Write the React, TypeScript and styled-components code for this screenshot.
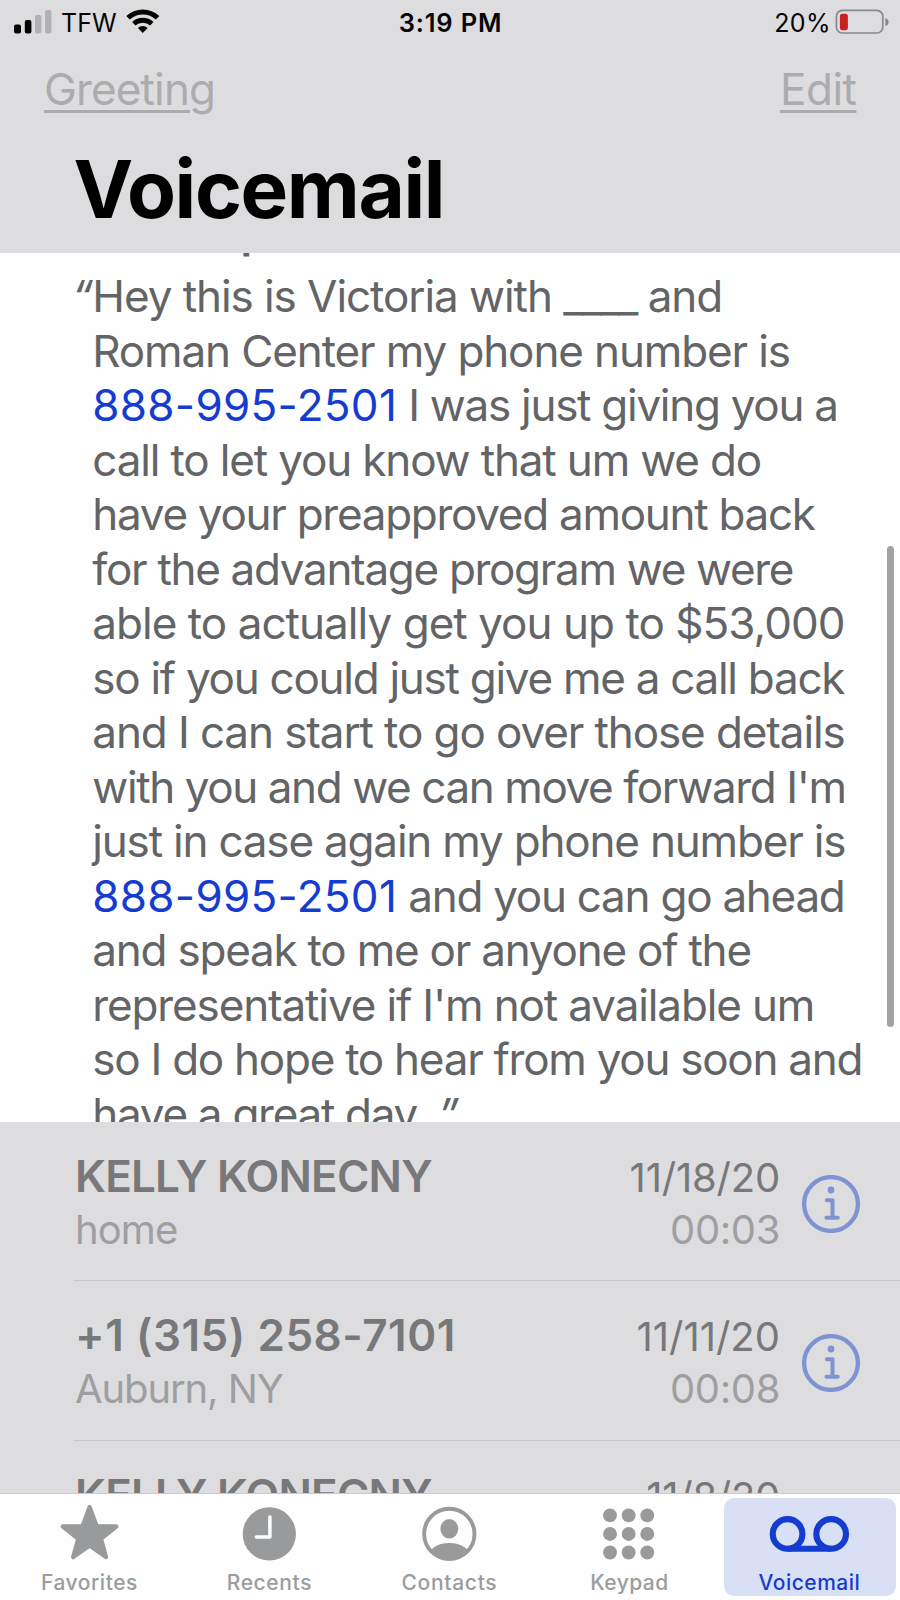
import React from "react";
import styled, { createGlobalStyle } from "styled-components";

const GlobalStyle = createGlobalStyle`
  * { box-sizing: border-box; }
  body { margin: 0; background: #fefefe; font-family: Inter, "Liberation Sans", sans-serif; }
`;

const Screen = styled.div`
  width: 900px;
  height: 1600px;
  display: flex;
  flex-direction: column;
  overflow: hidden;
  background: #fefefe;
`;

const Header = styled.header`
  flex: none;
  height: 253px;
  background: #dddddf;
`;

const StatusBar = styled.div`
  height: 46px;
  padding: 0 10px 0 13px;
  display: grid;
  grid-template-columns: 1fr auto 1fr;
  align-items: center;
  font-size: 25px;
  line-height: 30px;
  color: #050505;
`;

const StatusGroup = styled.div<{ $end?: boolean }>`
  display: flex;
  align-items: center;
  justify-content: ${(p) => (p.$end ? "flex-end" : "flex-start")};
`;

const Carrier = styled.span`
  margin: 0 9px 0 8px;
`;

const Clock = styled.span`
  font-weight: 600;
  font-size: 25.5px;
  letter-spacing: 0.8px;
  padding-right: 2px;
`;

const Percent = styled.span`
  letter-spacing: 0.4px;
  margin-right: 4px;
`;

const NavBar = styled.nav`
  padding: 15.5px 43.5px 0 44px;
  display: flex;
  justify-content: space-between;
`;

const NavLink = styled.a<{ $spacing: number }>`
  font-size: 44px;
  line-height: 54px;
  color: #acacae;
  letter-spacing: ${(p) => p.$spacing}px;
  text-decoration: underline;
  text-decoration-thickness: 3px;
  text-underline-offset: 5px;
`;

const Title = styled.h1`
  margin: 25.5px 0 0 73.5px;
  font-size: 80px;
  line-height: 96px;
  font-weight: 700;
  letter-spacing: -1.4px;
  color: #000;
`;

const Transcript = styled.section`
  flex: none;
  position: relative;
  height: 869px;
  overflow: hidden;
  padding-left: 92.3px;
  color: #636466;
  font-size: 44px;
  line-height: 54.5px;
`;

const TranscriptTitle = styled.h2`
  margin: -48.5px 0 10px -18px;
  font-size: 44px;
  font-weight: 600;
  letter-spacing: -1.1px;
`;

const Line = styled.div`
  height: 54.5px;
  white-space: pre;
`;

const Run = styled.span<{ $spacing: number; $phone?: boolean }>`
  letter-spacing: ${(p) => p.$spacing}px;
  color: ${(p) => (p.$phone ? "#153cd0" : "inherit")};
`;

const OpenQuote = styled.span`
  display: inline-block;
  width: 20.5px;
  margin-left: -20.5px;
  font-style: italic;
`;

const CloseQuote = styled.span`
  display: inline-block;
  margin-left: 11.5px;
  font-style: italic;
`;

const ScrollThumb = styled.div`
  position: absolute;
  right: 6.5px;
  top: 293px;
  width: 6.5px;
  height: 481px;
  border-radius: 4px;
  background: #a3a3a4;
`;

const List = styled.section`
  flex: 1;
  min-height: 0;
  overflow: hidden;
  background: #dddddf;
`;

const Row = styled.article<{ $height: number }>`
  height: ${(p) => p.$height}px;
  margin-left: 74px;
  padding: 28px 40px 0 0;
  display: flex;
  border-bottom: 1px solid #c9c9cc;
`;

const Caller = styled.div`
  flex: 1;
  padding-left: 1px;
`;

const Name = styled.div<{ $spacing: number }>`
  font-size: 44px;
  line-height: 53.5px;
  font-weight: 600;
  letter-spacing: ${(p) => p.$spacing}px;
  color: #78787a;
`;

const Place = styled.div<{ $spacing: number }>`
  font-size: 40px;
  line-height: 52px;
  letter-spacing: ${(p) => p.$spacing}px;
  color: #9f9fa2;
`;

const When = styled.div`
  padding-top: 2px;
  margin-right: 22px;
  text-align: right;
  font-size: 40px;
  line-height: 52px;
`;

const DateText = styled.div<{ $spacing: number }>`
  letter-spacing: ${(p) => p.$spacing}px;
  color: #78787a;
`;

const Duration = styled.div`
  letter-spacing: -0.4px;
  color: #9f9fa2;
`;

const InfoIcon = styled.svg`
  flex: none;
  width: 58px;
  height: 58px;
  margin-top: 24.5px;
  fill: none;
  stroke: #7f92d2;
  stroke-width: 4;
  stroke-linecap: round;
  stroke-linejoin: round;
`;

const TabBar = styled.footer`
  flex: none;
  height: 107px;
  display: flex;
  border-top: 1px solid #cbcbcd;
`;

const Tab = styled.div<{ $active?: boolean; $spacing: number }>`
  flex: 1;
  margin: 4px;
  padding-top: 7px;
  border-radius: 10px;
  display: flex;
  flex-direction: column;
  align-items: center;
  gap: 6.5px;
  background: ${(p) => (p.$active ? "#d9e0f6" : "transparent")};
  color: ${(p) => (p.$active ? "#153cd0" : "#9b9c9d")};
  font-size: 21px;
  line-height: 26px;
  font-weight: 500;
  letter-spacing: ${(p) => p.$spacing}px;
`;

const TabLabel = styled.span`
  padding-right: 1.2px;
`;

const SignalIcon = () => (
  <svg width="40" height="46" viewBox="13 0 40 46">
    <rect x="14" y="24.5" width="7" height="9" rx="2" fill="#050505" />
    <rect x="24.8" y="20" width="6.6" height="13.5" rx="2" fill="#050505" />
    <rect x="35" y="15" width="6.4" height="18.5" rx="2" fill="#b1b1b3" />
    <rect x="45" y="10" width="6.4" height="23.5" rx="2" fill="#b1b1b3" />
  </svg>
);

const WifiIcon = () => (
  <svg width="34" height="46" viewBox="126 0 34 46" fill="none" stroke="#050505">
    <path d="M128 17.8 A21.6 21.6 0 0 1 157.6 17.8" strokeWidth="5" />
    <path d="M133.8 23.8 A13.2 13.2 0 0 1 151.8 23.8" strokeWidth="4.8" />
    <path d="M142.8 33 L137.9 28.1 A7 7 0 0 1 147.7 28.1 Z" fill="#050505" stroke="none" />
  </svg>
);

const BatteryIcon = () => (
  <svg width="55" height="46" viewBox="835 0 55 46">
    <rect x="836.4" y="10.4" width="46.4" height="22.6" rx="6" fill="none" stroke="#89898b" strokeWidth="1.7" />
    <rect x="839.9" y="13.8" width="8" height="16.4" rx="2.6" fill="#c9211f" />
    <path d="M885.3 18 Q888.6 19 888.6 22 Q888.6 25 885.3 26 Z" fill="#89898b" />
  </svg>
);

const StarIcon = () => (
  <svg width="84" height="60" viewBox="0 0 84 60">
    <path
      d="M41.6 2.2 L48.8 21.8 L69 22 L53.2 34.6 L58.4 53.4 L41.6 41.6 L24.8 53.4 L30 34.6 L14.2 22 L34.4 21.8 Z"
      fill="#989a9b"
      stroke="#989a9b"
      strokeWidth="4.5"
      strokeLinejoin="round"
    />
  </svg>
);

const RecentsIcon = () => (
  <svg width="84" height="60" viewBox="0 0 84 60">
    <circle cx="41.3" cy="29.7" r="27.3" fill="#989a9b" />
    <path d="M41.9 12.2 V32.8 H28" fill="none" stroke="#fefefe" strokeWidth="3.6" strokeLinecap="round" strokeLinejoin="round" />
  </svg>
);

const ContactsIcon = () => (
  <svg width="84" height="60" viewBox="0 0 84 60">
    <clipPath id="contact-disc">
      <circle cx="41.3" cy="29.7" r="26.5" />
    </clipPath>
    <circle cx="41.3" cy="29.7" r="25.8" fill="none" stroke="#989a9b" strokeWidth="4" />
    <ellipse cx="41.3" cy="24.4" rx="9.2" ry="10" fill="#989a9b" />
    <ellipse cx="41.3" cy="54.5" rx="22.5" ry="15.6" fill="#989a9b" clipPath="url(#contact-disc)" />
  </svg>
);

const KeypadIcon = () => (
  <svg width="84" height="60" viewBox="0 0 84 60" fill="#989a9b">
    {[10.7, 29.7, 48.7].map((y) =>
      [21.5, 40.6, 59.7].map((x) => <circle key={`${x}-${y}`} cx={x} cy={y} r="7.1" />)
    )}
  </svg>
);

const VoicemailIcon = () => (
  <svg width="84" height="60" viewBox="0 0 84 60" fill="none" stroke="#153cd0" strokeWidth="6.3">
    <circle cx="19" cy="29.7" r="15.2" />
    <circle cx="63.7" cy="29.7" r="15.2" />
    <path d="M19 44.9 H63.7" />
  </svg>
);

type Segment = { text: string; spacing: number; phone?: boolean };

const transcript: Segment[][] = [
  [{ text: "Roman Center my phone number is", spacing: -1.12 }],
  [
    { text: "888-995-2501", spacing: 0.3, phone: true },
    { text: " I was just giving you a", spacing: -1.28 },
  ],
  [{ text: "call to let you know that um we do", spacing: -1.15 }],
  [{ text: "have your preapproved amount back", spacing: -1.28 }],
  [{ text: "for the advantage program we were", spacing: -1.31 }],
  [{ text: "able to actually get you up to $53,000", spacing: -0.96 }],
  [{ text: "so if you could just give me a call back", spacing: -1.27 }],
  [{ text: "and I can start to go over those details", spacing: -1.1 }],
  [{ text: "with you and we can move forward I'm", spacing: -1.4 }],
  [{ text: "just in case again my phone number is", spacing: -1.19 }],
  [
    { text: "888-995-2501", spacing: 0.3, phone: true },
    { text: " and you can go ahead", spacing: -1.26 },
  ],
  [{ text: "and speak to me or anyone of the", spacing: -1.22 }],
  [{ text: "representative if I'm not available um", spacing: -1.13 }],
  [{ text: "so I do hope to hear from you soon and", spacing: -1.26 }],
];

const calls = [
  { name: "KELLY KONECNY", nameSpacing: -0.8, place: "home", placeSpacing: -0.9, date: "11/18/20", dateSpacing: -0.2, time: "00:03", height: 159 },
  { name: "+1 (315) 258-7101", nameSpacing: 0.55, place: "Auburn, NY", placeSpacing: -1.1, date: "11/11/20", dateSpacing: 0, time: "00:08", height: 160 },
  { name: "KELLY KONECNY", nameSpacing: -0.8, place: "home", placeSpacing: -0.9, date: "11/8/20", dateSpacing: -0.3, time: "00:03", height: 160 },
];

const tabs = [
  { label: "Favorites", spacing: 0.52, Icon: StarIcon },
  { label: "Recents", spacing: 0.63, Icon: RecentsIcon },
  { label: "Contacts", spacing: 0.7, Icon: ContactsIcon },
  { label: "Keypad", spacing: 0.45, Icon: KeypadIcon },
  { label: "Voicemail", spacing: 0.5, Icon: VoicemailIcon, active: true },
];

export default function App() {
  return (
    <Screen>
      <GlobalStyle />
      <Header>
        <StatusBar>
          <StatusGroup>
            <SignalIcon />
            <Carrier>TFW</Carrier>
            <WifiIcon />
          </StatusGroup>
          <Clock>3:19 PM</Clock>
          <StatusGroup $end>
            <Percent>20%</Percent>
            <BatteryIcon />
          </StatusGroup>
        </StatusBar>
        <NavBar>
          <NavLink $spacing={-0.85}>Greeting</NavLink>
          <NavLink $spacing={-0.5}>Edit</NavLink>
        </NavBar>
        <Title>Voicemail</Title>
      </Header>

      <Transcript>
        <TranscriptTitle>Transcription</TranscriptTitle>
        <Line>
          <OpenQuote>“</OpenQuote>
          <Run $spacing={-1.06}>Hey this is Victoria with </Run>
          <Run $spacing={-1.7}>____</Run>
          <Run $spacing={-1.2}> and</Run>
        </Line>
        {transcript.map((segments, i) => (
          <Line key={i}>
            {segments.map((s) => (
              <Run key={s.text} $spacing={s.spacing} $phone={s.phone}>
                {s.text}
              </Run>
            ))}
          </Line>
        ))}
        <Line>
          <Run $spacing={-1.28}>have a great day.</Run>
          <CloseQuote>”</CloseQuote>
        </Line>
        <ScrollThumb />
      </Transcript>

      <List>
        {calls.map((c, i) => (
          <Row key={i} $height={c.height}>
            <Caller>
              <Name $spacing={c.nameSpacing}>{c.name}</Name>
              <Place $spacing={c.placeSpacing}>{c.place}</Place>
            </Caller>
            <When>
              <DateText $spacing={c.dateSpacing}>{c.date}</DateText>
              <Duration>{c.time}</Duration>
            </When>
            <InfoIcon viewBox="0 0 58 58">
              <circle cx="29" cy="29" r="26.9" strokeWidth="4.3" />
              <circle cx="29" cy="15" r="3.4" fill="#7f92d2" stroke="none" />
              <path d="M24.8 25.3 H30.5 V42.7 M24.4 42.7 H35.8" />
            </InfoIcon>
          </Row>
        ))}
      </List>

      <TabBar>
        {tabs.map(({ label, spacing, Icon, active }) => (
          <Tab key={label} $active={active} $spacing={spacing}>
            <Icon />
            <TabLabel>{label}</TabLabel>
          </Tab>
        ))}
      </TabBar>
    </Screen>
  );
}
